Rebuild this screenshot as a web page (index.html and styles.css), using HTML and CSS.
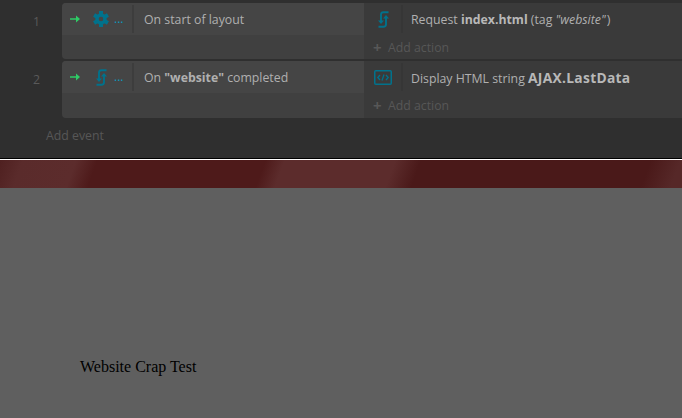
FILE: index.html
```html
<!DOCTYPE html>
<html lang="en">
<head>
<meta charset="utf-8">
<title>Website Crap Test</title>
<link rel="stylesheet" href="styles.css">
</head>
<body>
<svg class="defs" width="0" height="0" aria-hidden="true">
  <symbol id="sync" viewBox="0 0 13 17">
    <path d="M11.500 1.200H6.500A2.500 2.500 0 0 0 4 3.700V10M1.500 15.800H6.500A2.500 2.500 0 0 0 9 13.300V7" fill="none" stroke="currentColor" stroke-width="1.900"/>
    <path d="M1 9.500H7L4 13ZM6 7.500H12L9 4Z" fill="currentColor"/>
  </symbol>
</svg>
<main class="editor">
  <section class="event">
    <div class="event-num">1</div>
    <div class="block">
      <div class="cond">
        <div class="cond-row">
          <div class="trigger">
            <svg class="arrow" viewBox="0 0 10 8"><path d="M0 3.200H6V0.500L10 4L6 7.500V4.800H0Z"/></svg>
            <svg class="gear" viewBox="0 0 24 24">
              <g class="gear-teeth"><path d="M12 0V24M1.600 6L22.400 18M1.600 18L22.400 6"/></g>
              <circle cx="12" cy="12" r="8.500"/>
              <circle class="gear-hole" cx="12" cy="12" r="3.500"/>
            </svg>
            <span class="more">...</span>
          </div>
          <div class="cond-text">On start of layout</div>
        </div>
      </div>
      <div class="actions">
        <div class="action-row">
          <div class="action-icon"><svg class="icon-sync"><use href="#sync"/></svg></div>
          <div class="action-text"><span>Request <b>index.html</b> (tag <i>"website"</i>)</span></div>
        </div>
        <div class="add-action"><span class="plus">+</span>Add action</div>
      </div>
    </div>
  </section>
  <section class="event event-tall">
    <div class="event-num">2</div>
    <div class="block">
      <div class="cond">
        <div class="cond-row">
          <div class="trigger">
            <svg class="arrow" viewBox="0 0 10 8"><path d="M0 3.200H6V0.500L10 4L6 7.500V4.800H0Z"/></svg>
            <svg class="icon-sync icon-sync-cond"><use href="#sync"/></svg>
            <span class="more">...</span>
          </div>
          <div class="cond-text">On <b>"website"</b> completed</div>
        </div>
      </div>
      <div class="actions">
        <div class="action-row">
          <div class="action-icon">
            <svg class="icon-html" viewBox="0 0 18 15">
              <rect x="0.750" y="0.750" width="16.500" height="13.500" rx="1" fill="none" stroke="currentColor" stroke-width="1.500"/>
              <path d="M6 5L3.800 7.500L6 10M12 5L14.200 7.500L12 10M10 4.500L8 10.500" fill="none" stroke="currentColor" stroke-width="1.300"/>
            </svg>
          </div>
          <div class="action-text"><span>Display HTML string <b class="caps">AJAX.LastData</b></span></div>
        </div>
        <div class="add-action"><span class="plus">+</span>Add action</div>
      </div>
    </div>
  </section>
  <div class="add-event">Add event</div>
</main>
<div class="banner"></div>
<div class="page-body">Website Crap Test</div>
</body>
</html>
```
FILE: styles.css
```css
html, body {
  margin: 0;
  height: 100%;
  overflow: hidden;
}

body {
  width: 682px;
  height: 418px;
  display: flex;
  flex-direction: column;
  background: #5f5f5f;
}

.defs {
  display: none;
}

.editor {
  height: 158px;
  box-sizing: border-box;
  padding-top: 3px;
  display: flex;
  flex-direction: column;
  gap: 2px;
  background: #2f2f2f;
  font-family: "Open Sans", "Noto Sans", sans-serif;
  font-size: 12.300px;
  color: #b0b0b0;
}

.event {
  display: flex;
  height: 56px;
}

.event-tall {
  height: 57px;
}

.event-tall .cond-text,
.event-tall .action-text span {
  padding-top: 1px;
}

.event-num {
  width: 62px;
  box-sizing: border-box;
  padding: 10px 22px 0 0;
  text-align: right;
  color: #5a5a5a;
  line-height: 17px;
}

.block {
  flex: 1;
  display: flex;
  min-width: 0;
}

.cond {
  width: 302px;
  border-radius: 4px 0 0 4px;
  background: #404040;
  overflow: hidden;
}

.cond-row {
  height: 32px;
  display: flex;
  align-items: center;
  background: #454545;
}

.trigger {
  width: 72px;
  height: 28px;
  display: flex;
  align-items: center;
  box-sizing: border-box;
  border-right: 2px solid #3d3d3d;
  flex: none;
}

.arrow {
  width: 10px;
  height: 8px;
  margin-left: 8px;
  fill: #2ecc66;
}

.gear {
  width: 16px;
  height: 16px;
  margin-left: 13px;
  fill: #00728c;
}

.gear-teeth {
  fill: none;
  stroke: #00728c;
  stroke-width: 6;
}

.gear-hole {
  fill: #454545;
}

.icon-sync {
  display: block;
  width: 13px;
  height: 17px;
  color: #00728c;
  flex: none;
}

.icon-sync-cond {
  margin-left: 15px;
}

.icon-sync-cond + .more {
  margin-left: 6px;
}

.more {
  margin-left: 5px;
  color: #0a9cc2;
  font-size: 12px;
  line-height: 14px;
}

.cond-text {
  padding-left: 10px;
  color: #b0b0b0;
}

.actions {
  flex: 1;
  min-width: 0;
  background: #3a3a3a;
}

.action-row {
  height: 32px;
  display: flex;
  align-items: center;
  padding-left: 10px;
}

.action-icon {
  width: 18px;
  display: flex;
  justify-content: center;
  flex: none;
}

.action-text {
  margin-left: 9px;
  height: 28px;
  display: flex;
  align-items: center;
  padding-left: 8px;
  border-left: 2px solid #363636;
  color: #b0b0b0;
}

.action-text b {
  color: #b8b8b8;
}

.action-text i {
  margin-right: 1px;
}

.action-text .caps {
  font-size: 13.800px;
  letter-spacing: 0.300px;
}

.icon-html {
  display: block;
  width: 18px;
  height: 15px;
  color: #00728c;
  flex: none;
}

.add-action {
  height: 24px;
  display: flex;
  align-items: center;
  padding-left: 9px;
  color: #575757;
}

.plus {
  width: 15px;
  font-size: 15px;
  font-weight: 700;
  line-height: 15px;
}

.add-event {
  padding: 7px 0 0 46px;
  color: #575757;
  line-height: 17px;
}

.banner {
  height: 30px;
  box-sizing: border-box;
  border-top: 1px solid #000;
  box-shadow: inset 0 1px 0 #fff;
  flex: none;
  background: linear-gradient(110deg, #4f2020 0, #5a2b2b 22px, #5c2c2c 72px, #4e1a1a 92px, #4e1a1a 250px, #5c2c2c 268px, #5c2c2c 372px, #4a1919 396px, #4a1919 612px, #562828 640px, #562828 700px);
}

.page-body {
  flex: 1;
  padding: 170px 0 0 80px;
  font-family: "Liberation Serif", serif;
  font-size: 16px;
  color: #000;
  background: #5f5f5f;
}
```
